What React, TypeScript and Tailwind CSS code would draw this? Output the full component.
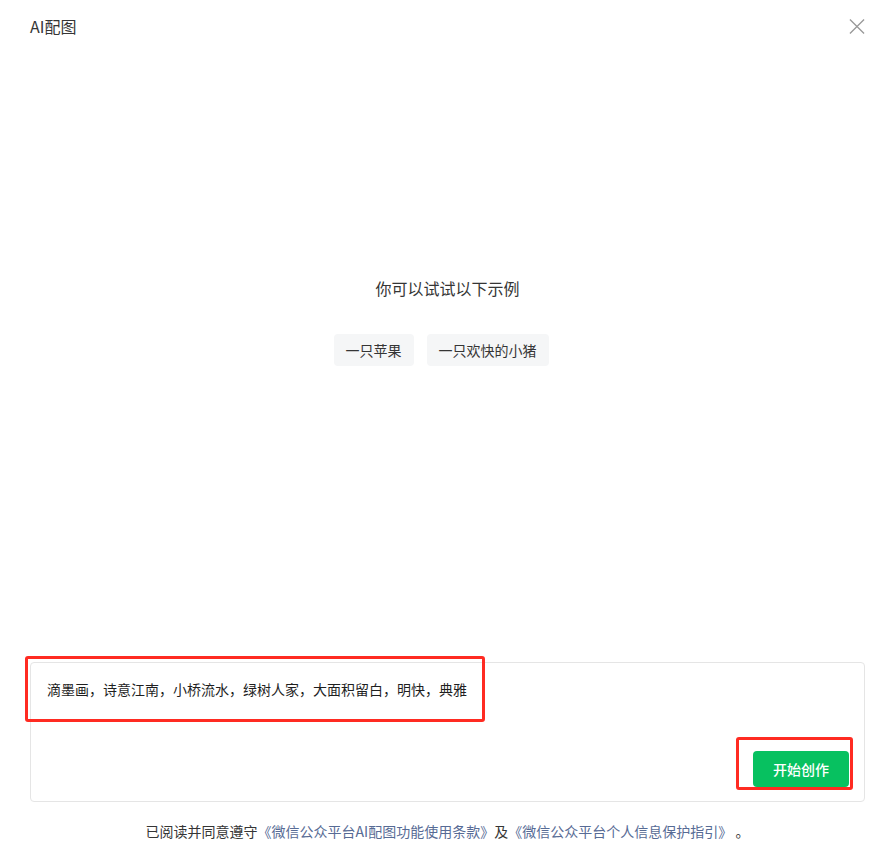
import { useState } from 'react';

const font = { fontFamily: '"Noto Sans CJK SC", "Noto Sans", sans-serif' };

export default function App() {
  const [prompt] = useState('滴墨画，诗意江南，小桥流水，绿树人家，大面积留白，明快，典雅');
  const examples = ['一只苹果', '一只欢快的小猪'];

  return (
    <div style={font} className="w-[878px] h-[860px] bg-white flex flex-col pl-[30px] pr-[13px] text-[#333]">
      {/* 标题栏 */}
      <div className="h-[52px] flex items-center justify-between shrink-0">
        <span className="text-[16px] leading-6 text-[#353535]">AI配图</span>
        <button className="w-4 h-4 text-[#999] flex items-center justify-center">
          <svg width="17" height="17" viewBox="0 0 17 17" fill="none">
            <path d="M1 1L16 16M16 1L1 16" stroke="currentColor" strokeWidth="1.4" />
          </svg>
        </button>
      </div>

      {/* 示例 */}
      <div className="flex-1 flex flex-col items-center">
        <p className="mt-[224px] text-[16px] leading-6 text-[#353535]">你可以试试以下示例</p>
        <div className="mt-[34px] flex">
          {examples.map((e) => (
            <button key={e} className="h-8 px-3 mr-[13px] rounded bg-[#f5f6f7] text-[14px] text-[#353535]">
              {e}
            </button>
          ))}
        </div>
      </div>

      {/* 输入框 */}
      <div className="relative h-[140px] border border-[#e5e5e5] rounded shrink-0 flex flex-col justify-between pt-[15px] pl-4 pr-[15px] pb-[14px]">
        <p className="text-[14px] leading-[22px] text-[#1f1f1f]">{prompt}</p>
        <div className="flex justify-end">
          <button className="w-24 h-9 rounded bg-[#07c160] text-white text-[14px] font-medium">开始创作</button>
        </div>
        <div className="absolute left-[-6px] top-[-7px] w-[460px] h-[66px] border-[3px] border-[#ff2b22] rounded-[3px]" />
        <div className="absolute left-[705px] top-[74px] w-[117px] h-[53px] border-[3px] border-[#ff2b22] rounded-[3px]" />
      </div>

      {/* 协议 */}
      <div className="h-[58px] shrink-0 flex items-center justify-center text-[14px] text-[#353535]">
        <span>
          已阅读并同意遵守
          <a className="text-[#576b95]">《微信公众平台AI配图功能使用条款》</a>
          及
          <a className="text-[#576b95]">《微信公众平台个人信息保护指引》</a>
          {' '}。
        </span>
      </div>
    </div>
  );
}
